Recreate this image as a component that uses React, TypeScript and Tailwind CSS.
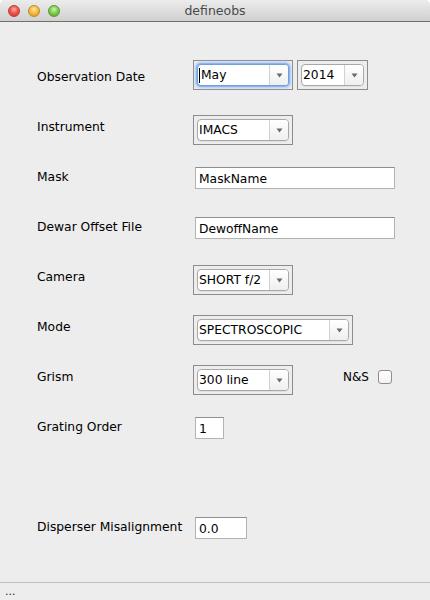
import React from "react";

function Arrow() {
  return (
    <svg width="7" height="5" viewBox="0 0 7 5">
      <path d="M0.5 0.5h6L3.5 4.5z" fill="#6a6a6a" />
    </svg>
  );
}

function Combo({
  value,
  outer,
  focused,
}: {
  value: string;
  outer: string;
  focused?: boolean;
}) {
  return (
    <div className={`border border-[#8c8c8c] p-[3px] h-[30px] ${outer}`}>
      <div
        className={`flex h-[22px] rounded-[4px] border bg-white ${
          focused
            ? "border-[#6f9fe0] shadow-[0_0_0_1px_#8db4ec,0_0_3px_2px_#a9c6f1]"
            : "border-[#a8a8a8] shadow-[0_1px_0_rgba(0,0,0,0.05)]"
        }`}
      >
        <div className="flex-1 flex items-center pl-[1px] pt-[1px] text-[12.3px] text-black whitespace-nowrap overflow-hidden">
          {focused && <span className="inline-block w-[1px] h-[15px] bg-black mr-[1px]" />}
          <span>{value}</span>
        </div>
        <div className="w-[19px] shrink-0 border-l border-[#d2d2d2] flex items-center justify-center rounded-r-[3px] bg-gradient-to-b from-white to-[#efefef]">
          <Arrow />
        </div>
      </div>
    </div>
  );
}

function Field({ value, w }: { value: string; w: string }) {
  return (
    <div
      className={`ml-[2px] h-[22px] ${w} mt-[16px] bg-white border border-[#b3b3b3] border-t-[#8f8f8f] flex items-center pl-[3px] pt-[2px] text-[12.3px] text-black`}
    >
      {value}
    </div>
  );
}

function Label({ children }: { children: React.ReactNode }) {
  return (
    <div className="w-[156px] shrink-0 mt-[19px] leading-[15px] text-[12.3px] text-black whitespace-nowrap">
      {children}
    </div>
  );
}

export default function App() {
  return (
    <div className="w-[430px] h-[600px] bg-white font-['DejaVu_Sans',sans-serif]">
      <div className="w-[430px] h-[600px] flex flex-col rounded-t-[5px] overflow-hidden bg-[#ededed]">
        {/* Title bar */}
        <div className="h-[22px] shrink-0 flex items-center relative bg-gradient-to-b from-[#ececec] to-[#d0d0d0] border-b border-[#6f6f6f]">
          <div className="flex items-center gap-[8px] pl-[8px]">
            <span className="w-[12px] h-[12px] rounded-full border border-[#b2403a] bg-[radial-gradient(circle_at_50%_35%,#ffb0a8_0%,#f3564d_45%,#c8302a_100%)]" />
            <span className="w-[12px] h-[12px] rounded-full border border-[#b98a2a] bg-[radial-gradient(circle_at_50%_35%,#ffe9a8_0%,#f8be3d_45%,#d3901c_100%)]" />
            <span className="w-[12px] h-[12px] rounded-full border border-[#5c963a] bg-[radial-gradient(circle_at_50%_35%,#d2f5a8_0%,#7fd151_45%,#4a9e2b_100%)]" />
          </div>
          <div className="absolute inset-0 flex items-center justify-center pt-[1px] text-[12.5px] text-[#4a4a4a] pointer-events-none">
            defineobs
          </div>
        </div>

        {/* Content */}
        <div className="flex-1 flex flex-col pl-[37px] pt-[29px]">
          <div className="flex h-[50px]">
            <Label>Observation Date</Label>
            <div className="flex mt-[9px] gap-[4px]">
              <Combo value="May" outer="w-[100px]" focused />
              <Combo value="2014" outer="w-[71px]" />
            </div>
          </div>

          <div className="flex h-[50px]">
            <Label>Instrument</Label>
            <div className="mt-[14px]">
              <Combo value="IMACS" outer="w-[100px]" />
            </div>
          </div>

          <div className="flex h-[50px]">
            <Label>Mask</Label>
            <Field value="MaskName" w="w-[200px]" />
          </div>

          <div className="flex h-[50px]">
            <Label>Dewar Offset File</Label>
            <Field value="DewoffName" w="w-[200px]" />
          </div>

          <div className="flex h-[50px]">
            <Label>Camera</Label>
            <div className="mt-[14px]">
              <Combo value="SHORT f/2" outer="w-[100px]" />
            </div>
          </div>

          <div className="flex h-[50px]">
            <Label>Mode</Label>
            <div className="mt-[14px]">
              <Combo value="SPECTROSCOPIC" outer="w-[160px]" />
            </div>
          </div>

          <div className="flex h-[50px]">
            <Label>Grism</Label>
            <div className="mt-[14px]">
              <Combo value="300 line" outer="w-[100px]" />
            </div>
            <div className="ml-[50px] mt-[19px] leading-[15px] text-[12px] text-black">N&amp;S</div>
            <div className="ml-[9px] mt-[19px] w-[14px] h-[14px] rounded-[3px] border border-[#8e8e8e] bg-gradient-to-b from-white to-[#f2f2f2]" />
          </div>

          <div className="flex h-[50px]">
            <Label>Grating Order</Label>
            <Field value="1" w="w-[29px]" />
          </div>

          <div className="h-[50px]" />

          <div className="flex h-[50px]">
            <Label>Disperser Misalignment</Label>
            <Field value="0.0" w="w-[52px]" />
          </div>
        </div>

        {/* Status bar */}
        <div className="h-[18px] shrink-0 border-t border-[#c0c0c0] flex items-start pl-[5px] pt-[2px] text-[11px] leading-[14px] text-[#222]">
          ...
        </div>
      </div>
    </div>
  );
}
